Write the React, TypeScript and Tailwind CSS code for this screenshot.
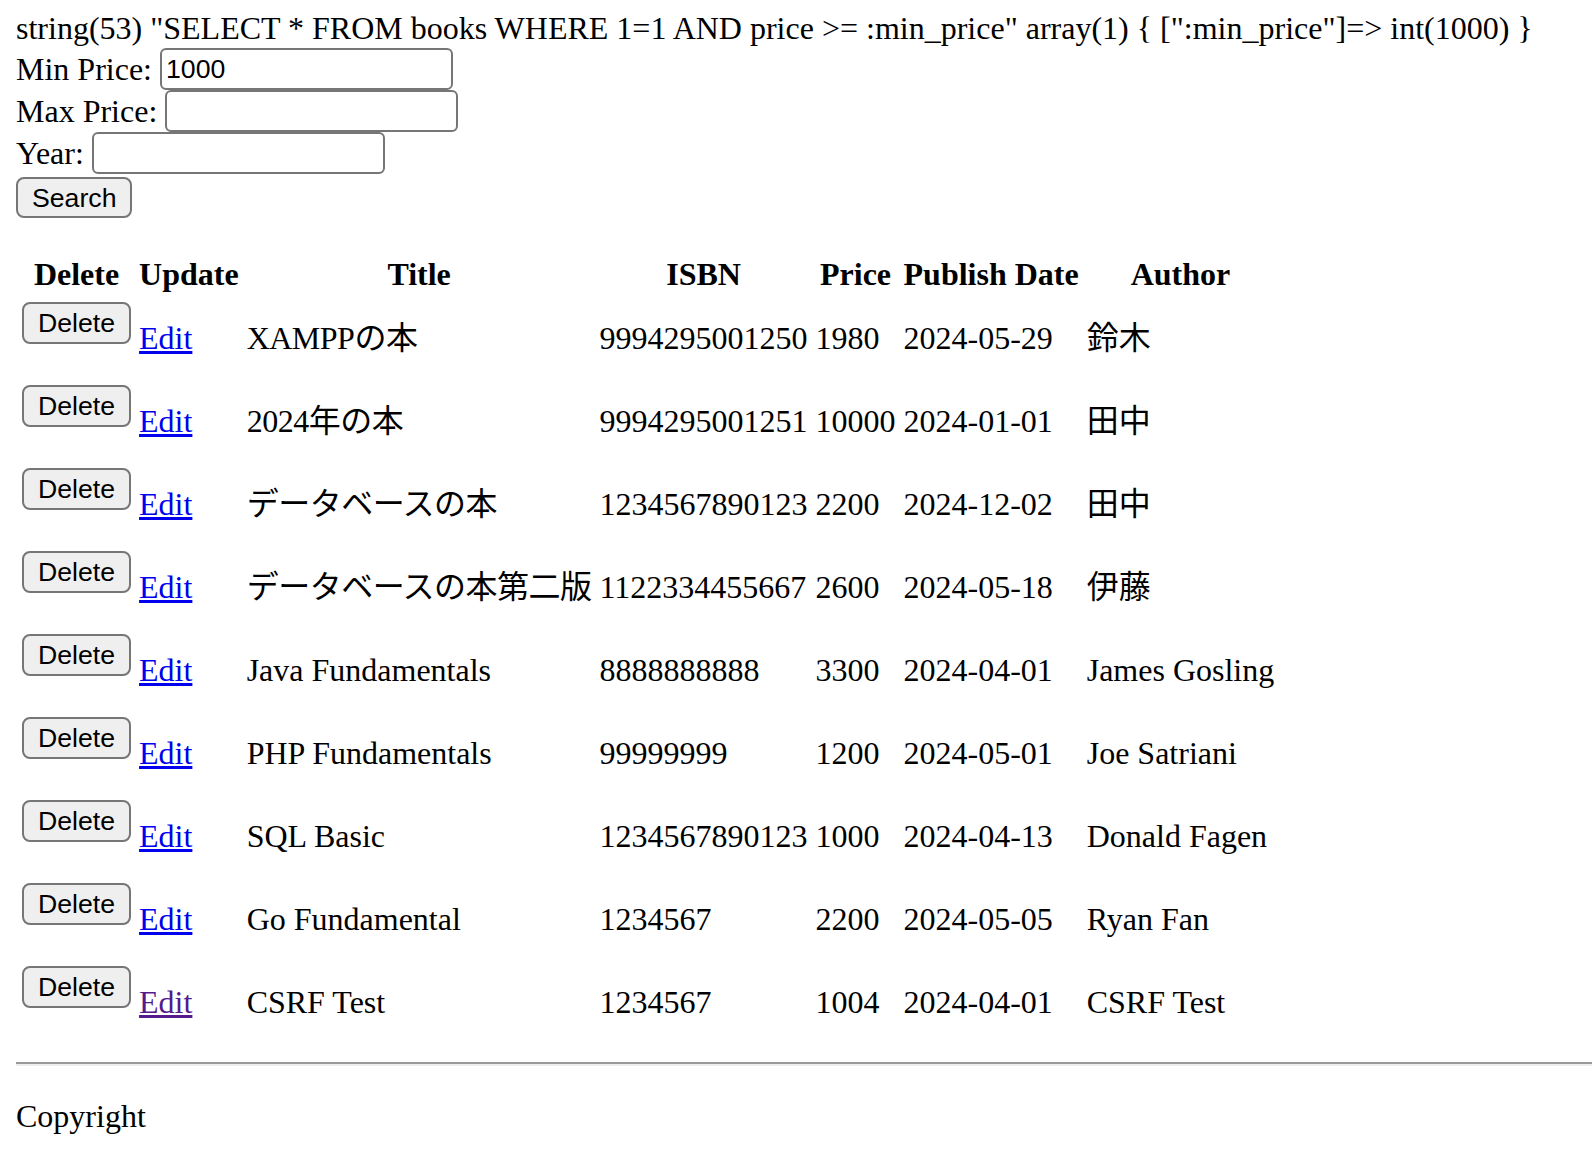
import React from 'react'

type Book = {
  title: string
  isbn: string
  price: string
  date: string
  author: string
  visited?: boolean
}

const books: Book[] = [
  { title: 'XAMPPの本', isbn: '9994295001250', price: '1980', date: '2024-05-29', author: '鈴木' },
  { title: '2024年の本', isbn: '9994295001251', price: '10000', date: '2024-01-01', author: '田中' },
  { title: 'データベースの本', isbn: '1234567890123', price: '2200', date: '2024-12-02', author: '田中' },
  { title: 'データベースの本第二版', isbn: '1122334455667', price: '2600', date: '2024-05-18', author: '伊藤' },
  { title: 'Java Fundamentals', isbn: '8888888888', price: '3300', date: '2024-04-01', author: 'James Gosling' },
  { title: 'PHP Fundamentals', isbn: '99999999', price: '1200', date: '2024-05-01', author: 'Joe Satriani' },
  { title: 'SQL Basic', isbn: '1234567890123', price: '1000', date: '2024-04-13', author: 'Donald Fagen' },
  { title: 'Go Fundamental', isbn: '1234567', price: '2200', date: '2024-05-05', author: 'Ryan Fan' },
  { title: 'CSRF Test', isbn: '1234567', price: '1004', date: '2024-04-01', author: 'CSRF Test', visited: true },
]

const inputCls =
  "ml-[8px] w-[293px] h-[42px] border-2 border-[#767676] rounded-[6px] bg-white px-[4px] py-0 text-[26.67px] leading-[30px] text-black font-['Liberation_Sans',Arial,sans-serif]"

const buttonCls =
  "block h-[42px] px-[14px] border-2 border-[#767676] rounded-[8px] bg-[#efefef] text-[26.67px] leading-[30px] text-black font-['Liberation_Sans',Arial,sans-serif]"

// CJK titles render a touch wider in Noto than in the original Mincho face
const hasCjk = (s: string) => /[^\x00-\x7f]/.test(s)

export default function App() {
  return (
    <div className="min-h-screen bg-white pl-4 pt-[12px] text-[32px] text-black font-['Liberation_Serif','Noto_Sans_CJK_JP','Times_New_Roman',serif]">
      {/* var_dump output */}
      <div className="h-[36px] leading-[32px] whitespace-nowrap">
        string(53) "SELECT * FROM books WHERE 1=1 AND price &gt;= :min_price" array(1) {'{'} [":min_price"]=&gt; int(1000) {'}'}
      </div>

      {/* search form */}
      <form className="mb-8" onSubmit={e => e.preventDefault()}>
        <div className="flex h-[42px] items-center whitespace-nowrap">
          Min Price:<input type="text" defaultValue="1000" className={inputCls} />
        </div>
        <div className="flex h-[42px] items-center whitespace-nowrap">
          Max Price:<input type="text" className={inputCls} />
        </div>
        <div className="flex h-[42px] items-center whitespace-nowrap">
          Year:<input type="text" className={inputCls} />
        </div>
        <div className="h-[44px] pt-[3px]">
          <button type="submit" className={buttonCls + ' !h-[41px]'}>Search</button>
        </div>
      </form>

      {/* book list */}
      <table className="border-separate border-spacing-1 leading-[37px]">
        <thead>
          <tr>
            <th className="p-[2px] text-center font-bold align-middle">Delete</th>
            <th className="p-[2px] text-center font-bold align-middle">Update</th>
            <th className="p-[2px] text-center font-bold align-middle">Title</th>
            <th className="p-[2px] text-center font-bold align-middle">ISBN</th>
            <th className="p-[2px] text-center font-bold align-middle">Price</th>
            <th className="p-[2px] text-center font-bold align-middle">Publish Date</th>
            <th className="p-[2px] text-center font-bold align-middle">Author</th>
          </tr>
        </thead>
        <tbody>
          {books.map((b, i) => (
            <tr key={i}>
              <td className="p-[2px] align-middle">
                <form className="mb-8 h-[43px] pt-[1px]" onSubmit={e => e.preventDefault()}>
                  <button type="submit" className={buttonCls}>Delete</button>
                </form>
              </td>
              <td className="p-[2px] align-middle">
                <a
                  href="#"
                  className={b.visited ? 'text-[#551a8b] underline' : 'text-[#0000ee] underline'}
                >
                  Edit
                </a>
              </td>
              <td
                className={
                  hasCjk(b.title)
                    ? 'p-[2px] align-middle whitespace-nowrap tracking-[-0.5px]'
                    : 'p-[2px] align-middle whitespace-nowrap'
                }
              >
                {b.title}
              </td>
              <td className="p-[2px] align-middle">{b.isbn}</td>
              <td className="p-[2px] align-middle">{b.price}</td>
              <td className="p-[2px] align-middle">{b.date}</td>
              <td className="p-[2px] align-middle whitespace-nowrap">{b.author}</td>
            </tr>
          ))}
        </tbody>
      </table>

      <hr className="my-4 h-0 border-0 border-t-2 border-b-2 border-t-[#9a9a9a] border-b-[#eeeeee]" />

      <p className="mt-8 leading-[37px]">Copyright</p>
    </div>
  )
}
